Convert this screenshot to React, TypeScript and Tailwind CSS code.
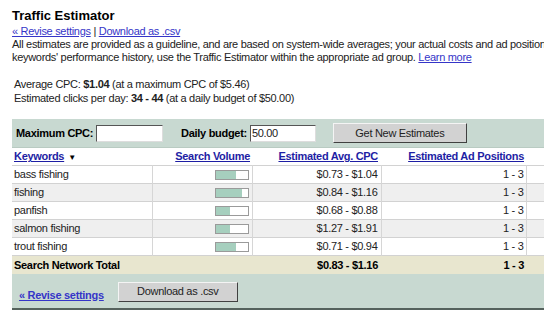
import { ChangeEvent, useState } from 'react'

interface Row {
  keyword: string
  volume: number
  cpc: string
  position: string
}

const ROWS: Row[] = [
  { keyword: 'bass fishing', volume: 20, cpc: '$0.73 - $1.04', position: '1 - 3' },
  { keyword: 'fishing', volume: 26, cpc: '$0.84 - $1.16', position: '1 - 3' },
  { keyword: 'panfish', volume: 14, cpc: '$0.68 - $0.88', position: '1 - 3' },
  { keyword: 'salmon fishing', volume: 14, cpc: '$1.27 - $1.91', position: '1 - 3' },
  { keyword: 'trout fishing', volume: 20, cpc: '$0.71 - $0.94', position: '1 - 3' },
]

function VolumeBar({ value }: { value: number }) {
  return (
    <div className="ml-auto h-[10px] w-[34px] border border-[#9a9a9a] bg-white">
      <div className="h-full bg-[#a6cfbe]" style={{ width: `${value}px` }} />
    </div>
  )
}

function OldButton({ label, width }: { label: string; width: string }) {
  return (
    <button
      className={`${width} h-[20px] border border-t-[#f4f4f4] border-l-[#f4f4f4] border-r-[#404040] border-b-[#404040] bg-[#d2d2d2] text-[11px] text-[#222] leading-none`}
    >
      {label}
    </button>
  )
}

export default function App() {
  const [maxCpc, setMaxCpc] = useState('')
  const [budget, setBudget] = useState('50.00')

  return (
    <div className="w-[544px] h-[311px] overflow-hidden bg-white font-['Liberation_Sans',Arial,sans-serif] text-[11px] tracking-[-0.3px] text-[#222]">
      <div className="pl-3 pt-[8px] whitespace-nowrap">
        <h1 className="text-[13px] font-bold leading-[16px] tracking-normal text-black">Traffic Estimator</h1>
        <div className="leading-[13px] mt-[1px]">
          <a href="#" className="text-[#3535c8] underline">« Revise settings</a>
          <span> | </span>
          <a href="#" className="text-[#3535c8] underline">Download as .csv</a>
        </div>
        <p className="leading-[13px]">
          All estimates are provided as a guideline, and are based on system-wide averages; your actual costs and ad positions may vary. To see your
        </p>
        <p className="leading-[13px]">
          keywords' performance history, use the Traffic Estimator within the appropriate ad group.{' '}
          <a href="#" className="text-[#3535c8] underline">Learn more</a>
        </p>
        <div className="mt-[13px] pl-[2px] leading-[14px]">
          <div>
            Average CPC: <b>$1.04</b> (at a maximum CPC of $5.46)
          </div>
          <div>
            Estimated clicks per day: <b>34 - 44</b> (at a daily budget of $50.00)
          </div>
        </div>
      </div>

      <div className="ml-3 mt-[14px] w-[560px] bg-[#c8d9d1] border-b-2 border-[#55625d]">
        <div className="h-[28px] flex items-center pl-1 whitespace-nowrap">
          <label className="font-bold text-black">Maximum CPC:</label>
          <input
            value={maxCpc}
            onChange={(e: ChangeEvent<HTMLInputElement>) => setMaxCpc(e.target.value)}
            className="ml-[3px] w-[67px] h-[17px] bg-white border border-t-[#555] border-l-[#555] border-r-[#ddd] border-b-[#ddd] px-[1px] text-[11px] outline-none"
          />
          <label className="ml-[18px] font-bold text-black">Daily budget:</label>
          <input
            value={budget}
            onChange={(e: ChangeEvent<HTMLInputElement>) => setBudget(e.target.value)}
            className="ml-[3px] w-[66px] h-[17px] bg-white border border-t-[#555] border-l-[#555] border-r-[#ddd] border-b-[#ddd] px-[1px] text-[11px] outline-none"
          />
          <div className="ml-[17px]">
            <OldButton label="Get New Estimates" width="w-[134px]" />
          </div>
        </div>

        <table className="table-fixed border-collapse w-full">
          <colgroup>
            <col className="w-[140px]" />
            <col className="w-[100px]" />
            <col className="w-[129px]" />
            <col className="w-[145px]" />
            <col />
          </colgroup>
          <thead>
            <tr className="h-[18px] bg-white border-t border-[#b9cbc2]">
              <th className="text-left font-bold pl-[2px]">
                <a href="#" className="text-[#1e1ea4] underline">Keywords</a>
                <span className="ml-[4px] text-[8px] text-black">▼</span>
              </th>
              <th className="text-right font-bold pr-[2px]">
                <a href="#" className="text-[#1e1ea4] underline">Search Volume</a>
              </th>
              <th className="text-right font-bold pr-[3px]">
                <a href="#" className="text-[#1e1ea4] underline">Estimated Avg. CPC</a>
              </th>
              <th className="text-right font-bold pr-[2px]">
                <a href="#" className="text-[#1e1ea4] underline">Estimated Ad Positions</a>
              </th>
              <th />
            </tr>
          </thead>
          <tbody>
            {ROWS.map((row, i) => (
              <tr
                key={row.keyword}
                className={`h-[18px] border-t border-[#d2d2d2] ${i % 2 === 1 ? 'bg-[#efefef]' : 'bg-white'}`}
              >
                <td className="pl-[2px] border-r border-[#d6d6d6] leading-[13px]">{row.keyword}</td>
                <td className="pr-[3px] border-r border-[#d6d6d6]">
                  <VolumeBar value={row.volume} />
                </td>
                <td className="text-right pr-[3px] border-r border-[#d6d6d6]">{row.cpc}</td>
                <td className="text-right pr-[2px] border-r border-[#d6d6d6]">{row.position}</td>
                <td />
              </tr>
            ))}
            <tr className="h-[18px] border-t border-[#d2d2d2] bg-[#e8e6cf] font-bold text-black">
              <td className="pl-[2px] whitespace-nowrap">Search Network Total</td>
              <td />
              <td className="text-right pr-[3px]">$0.83 - $1.16</td>
              <td className="text-right pr-[2px]">1 - 3</td>
              <td />
            </tr>
          </tbody>
        </table>

        <div className="h-[34px] flex items-start pt-[8px] pl-[7px]">
          <a href="#" className="mt-[5px] font-bold text-[#3535c8] underline">« Revise settings</a>
          <div className="ml-[14px]">
            <OldButton label="Download as .csv" width="w-[120px]" />
          </div>
        </div>
      </div>
    </div>
  )
}
